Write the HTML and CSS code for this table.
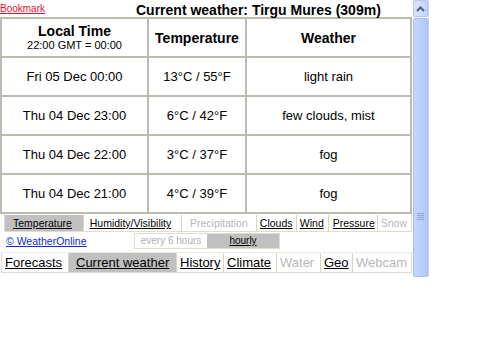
FILE: index.html
```html
<!DOCTYPE html>
<html>
<head>
<meta charset="utf-8">
<link rel="stylesheet" href="styles.css">
</head>
<body>
<div class="frame">
  <div class="content">
    <div class="top">
      <a class="bookmark" href="#">Bookmark</a>
      <span class="title">Current weather: Tirgu Mures (309m)</span>
    </div>
    <table class="wx">
      <tr class="head">
        <th class="c1">Local Time<div class="sub">22:00 GMT = 00:00</div></th>
        <th class="c2">Temperature</th>
        <th class="c3">Weather</th>
      </tr>
      <tr><td>Fri 05 Dec 00:00</td><td>13°C / 55°F</td><td>light rain</td></tr>
      <tr><td>Thu 04 Dec 23:00</td><td>6°C / 42°F</td><td>few clouds, mist</td></tr>
      <tr><td>Thu 04 Dec 22:00</td><td>3°C / 37°F</td><td>fog</td></tr>
      <tr><td>Thu 04 Dec 21:00</td><td>4°C / 39°F</td><td>fog</td></tr>
    </table>
    <div class="tabs small">
      <a class="tab sel" href="#">Temperature</a>
      <a class="tab" href="#">Humidity/Visibility</a>
      <span class="tab off">Precipitation</span>
      <a class="tab" href="#">Clouds</a>
      <a class="tab" href="#">Wind</a>
      <a class="tab" href="#">Pressure</a>
      <span class="tab off">Snow</span>
    </div>
    <div class="mid">
      <a class="copy" href="#">© WeatherOnline</a>
      <div class="freq">
        <span class="fopt off">every 6 hours</span>
        <a class="fopt sel" href="#">hourly</a>
      </div>
    </div>
    <div class="tabs big">
      <a class="tab" href="#">Forecasts</a>
      <a class="tab sel" href="#">Current weather</a>
      <a class="tab" href="#">History</a>
      <a class="tab" href="#">Climate</a>
      <span class="tab off">Water</span>
      <a class="tab" href="#">Geo</a>
      <span class="tab off">Webcam</span>
    </div>
  </div>
  <div class="scrollbar">
    <div class="sb-btn">
      <svg width="9" height="6" viewBox="0 0 9 6"><path d="M1 5 L4.5 1.5 L8 5" fill="none" stroke="#4d6185" stroke-width="2"/></svg>
    </div>
    <div class="sb-thumb">
      <div class="grip"><i></i><i></i><i></i><i></i></div>
    </div>
  </div>
</div>
</body>
</html>
```
FILE: styles.css
```css
* { box-sizing: border-box; }
body {
  margin: 0;
  background: #fff;
  font-family: "Liberation Sans", Arial, sans-serif;
  color: #000;
}
.frame {
  display: flex;
  width: 429px;
  height: 277px;
  border-right: 1px solid #c9d3e6;
}
.content {
  width: 413px;
  overflow: hidden;
}
.top {
  position: relative;
  height: 17px;
}
.bookmark {
  position: absolute;
  left: 0;
  top: 3px;
  font-size: 10px;
  color: #e8102a;
}
.title {
  position: absolute;
  left: 136px;
  top: 2px;
  font-size: 14px;
  font-weight: bold;
}
.wx {
  border-collapse: collapse;
  width: 412px;
  table-layout: fixed;
}
.wx th, .wx td {
  border: 2px solid #bdbab0;
  text-align: center;
  height: 39px;
  padding: 0;
  font-size: 13px;
}
.wx tr { height: 39px; }
.wx th { font-size: 14px; font-weight: bold; }
.wx th.c1 { width: 147px; line-height: 15px; }
.wx th.c2 { width: 98px; }
.sub { font-size: 11px; font-weight: normal; line-height: 12px; }
.tabs {
  display: flex;
  margin-left: 4px;
  margin-right: 1px;
  border: 1px solid #e0ddd0;
  border-top: 0;
}
.tab {
  color: #000;
  text-decoration: underline;
  border-right: 1px solid #d8d4c4;
  white-space: nowrap;
}
.tab:last-child { border-right: 0; }
.tab.off { color: #b8b8b8; text-decoration: none; }
.tab.sel { background: #c0c0c0; }
.small { height: 18px; margin-top: 0; border-top: 0; }
.small .tab {
  font-size: 10.5px;
  line-height: 16px;
  padding: 0 4px;
  margin-top: 1px;
}
.small .tab:nth-child(1) { width: 80px; padding-left: 8px; }
.small .tab:nth-child(2) { width: 100px; padding-left: 6px; }
.small .tab:nth-child(3) { width: 76px; padding-left: 8px; }
.small .tab:nth-child(4) { width: 40px; padding-left: 3px; }
.small .tab:nth-child(5) { width: 32px; padding-left: 3px; }
.small .tab:nth-child(6) { width: 49px; padding-left: 4px; }
.small .tab:nth-child(7) { flex: 1; padding-left: 3px; }
.mid {
  display: flex;
  align-items: center;
  height: 18px;
}
.copy {
  font-size: 10.5px;
  color: #0d2cd0;
  margin-left: 6px;
  width: 128px;
}
.freq {
  display: flex;
  border: 1px solid #e0ddd0;
  height: 16px;
}
.fopt {
  font-size: 10px;
  line-height: 14px;
  width: 72px;
  text-align: center;
}
.fopt.off { color: #b0b0b0; }
.fopt.sel { background: #c0c0c0; color: #000; text-decoration: underline; }
.big { margin-left: 1px; margin-top: 2px; height: 21px; border: 1px solid #dedbd0; border-top: 1px solid #ecebe4; }
.big .tab {
  font-size: 13px;
  line-height: 19px;
  padding: 0 3px;
}
.big .tab:nth-child(1) { padding-left: 3px; width: 67px; }
.big .tab:nth-child(2) { width: 108px; padding-left: 7px; }
.big .tab:nth-child(3) { width: 47px; }
.big .tab:nth-child(4) { width: 53px; }
.big .tab:nth-child(5) { width: 44px; }
.big .tab:nth-child(6) { width: 32px; }
.big .tab:nth-child(7) { flex: 1; }
.scrollbar {
  width: 15px;
  display: flex;
  flex-direction: column;
  background: #f3f6fd;
}
.sb-btn {
  height: 17px;
  border: 1px solid #b4c6ee;
  border-radius: 2px;
  background: linear-gradient(to right, #d9e4fd, #c2d3fb);
  display: flex;
  align-items: center;
  justify-content: center;
}
.sb-thumb {
  flex: 1;
  margin-top: 1px;
  border: 1px solid #a9bff0;
  border-radius: 2px;
  background: linear-gradient(to right, #c5d6fc, #bccffb 60%, #b0c5f8);
  display: flex;
  align-items: center;
  justify-content: center;
  padding-top: 138px;
}
.grip { display: flex; flex-direction: column; gap: 1px; }
.grip i { display: block; width: 7px; height: 1px; background: #8fa8e0; }
```
